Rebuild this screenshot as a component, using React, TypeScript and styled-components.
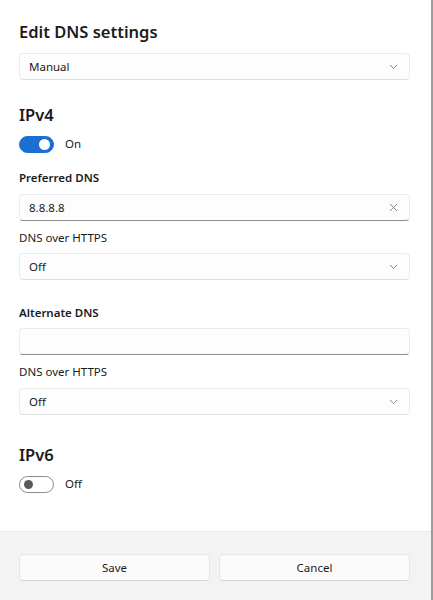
import React from "react";
import styled, { createGlobalStyle } from "styled-components";

const Global = createGlobalStyle`
  html, body { margin: 0; padding: 0; background: #ffffff; }
  body { font-family: "Segoe UI", "Noto Sans", "Open Sans", sans-serif; color: #1b1b1b; }
  * { box-sizing: border-box; }
`;

const Dialog = styled.div`
  width: 433px;
  height: 600px;
  display: flex;
  flex-direction: column;
  background: #ffffff;
  border-right: 2px solid #9c9c9c;
`;

const Content = styled.div`
  flex: 1;
  display: flex;
  flex-direction: column;
  padding: 20px 21px 0 19px;
`;

const Title = styled.h1`
  margin: 0;
  font-size: 16.5px;
  line-height: 24px;
  font-weight: 600;
  color: #1b1b1b;
`;

const Heading = styled.h2<{ $mt: number }>`
  margin: ${(p) => p.$mt}px 0 0 0;
  font-size: 16.5px;
  line-height: 24px;
  font-weight: 600;
  color: #1b1b1b;
`;

const Label = styled.div<{ $mt: number; $bold?: boolean }>`
  margin-top: ${(p) => p.$mt}px;
  font-size: 11.5px;
  line-height: 16px;
  font-weight: ${(p) => (p.$bold ? 600 : 400)};
  color: #1b1b1b;
`;

const Field = styled.div<{ $mt: number; $input?: boolean }>`
  margin-top: ${(p) => p.$mt}px;
  height: 27px;
  display: flex;
  align-items: center;
  justify-content: space-between;
  padding: 0 10px 0 9px;
  background: #fdfdfd;
  border: 1px solid #ececec;
  border-bottom: 1px solid ${(p) => (p.$input ? "#8d8d8d" : "#e0e0e0")};
  border-radius: 4px;
  font-size: 11.5px;
  color: #1b1b1b;
`;

const FieldText = styled.span`
  line-height: 16px;
`;

const IconSlot = styled.span`
  display: flex;
  align-items: center;
  justify-content: center;
  width: 12px;
  height: 12px;
  color: #8a8a8a;
`;

const ToggleRow = styled.div<{ $mt: number }>`
  margin-top: ${(p) => p.$mt}px;
  display: flex;
  align-items: center;
  gap: 11px;
  height: 18px;
`;

const Track = styled.div<{ $on: boolean }>`
  position: relative;
  width: 35px;
  height: 17px;
  border-radius: 9px;
  background: ${(p) => (p.$on ? "#1d6fcf" : "#ffffff")};
  border: 1px solid ${(p) => (p.$on ? "#1d6fcf" : "#8a8a8a")};
`;

const Knob = styled.div<{ $on: boolean }>`
  position: absolute;
  top: ${(p) => (p.$on ? 2 : 3)}px;
  left: ${(p) => (p.$on ? 19 : 4)}px;
  width: ${(p) => (p.$on ? 11 : 9)}px;
  height: ${(p) => (p.$on ? 11 : 9)}px;
  border-radius: 50%;
  background: ${(p) => (p.$on ? "#ffffff" : "#5a5a5a")};
`;

const ToggleText = styled.span`
  font-size: 11.5px;
  line-height: 16px;
  color: #1b1b1b;
`;

const Footer = styled.div`
  height: 69px;
  background: #f3f3f3;
  border-top: 1px solid #e8e8e8;
  padding: 22px 21px 0 19px;
  display: grid;
  grid-template-columns: 1fr 1fr;
  column-gap: 9px;
  align-items: start;
`;

const Button = styled.button`
  height: 27px;
  background: #fbfbfb;
  border: 1px solid #e6e6e6;
  border-bottom-color: #d6d6d6;
  border-radius: 4px;
  font-family: inherit;
  font-size: 11.5px;
  color: #1b1b1b;
  padding: 0;
`;

const Chevron = () => (
  <IconSlot>
    <svg width="9" height="6" viewBox="0 0 9 6" fill="none">
      <path d="M1 1l3.5 3.5L8 1" stroke="currentColor" strokeWidth="1" />
    </svg>
  </IconSlot>
);

const Clear = () => (
  <IconSlot>
    <svg width="9" height="9" viewBox="0 0 9 9" fill="none">
      <path d="M1 1l7 7M8 1L1 8" stroke="currentColor" strokeWidth="1" />
    </svg>
  </IconSlot>
);

const Toggle = ({ on, mt }: { on: boolean; mt: number }) => (
  <ToggleRow $mt={mt}>
    <Track $on={on}>
      <Knob $on={on} />
    </Track>
    <ToggleText>{on ? "On" : "Off"}</ToggleText>
  </ToggleRow>
);

export default function App() {
  return (
    <>
      <Global />
      <Dialog>
        <Content>
          <Title>Edit DNS settings</Title>
          <Field $mt={9}>
            <FieldText>Manual</FieldText>
            <Chevron />
          </Field>

          <Heading $mt={23}>IPv4</Heading>
          <Toggle on mt={8} />

          <Label $mt={17} $bold>Preferred DNS</Label>
          <Field $mt={8} $input>
            <FieldText>8.8.8.8</FieldText>
            <Clear />
          </Field>
          <Label $mt={9}>DNS over HTTPS</Label>
          <Field $mt={7}>
            <FieldText>Off</FieldText>
            <Chevron />
          </Field>

          <Label $mt={25} $bold>Alternate DNS</Label>
          <Field $mt={7} $input>
            <FieldText></FieldText>
          </Field>
          <Label $mt={9}>DNS over HTTPS</Label>
          <Field $mt={8}>
            <FieldText>Off</FieldText>
            <Chevron />
          </Field>

          <Heading $mt={28}>IPv6</Heading>
          <Toggle on={false} mt={8} />
        </Content>
        <Footer>
          <Button>Save</Button>
          <Button>Cancel</Button>
        </Footer>
      </Dialog>
    </>
  );
}
